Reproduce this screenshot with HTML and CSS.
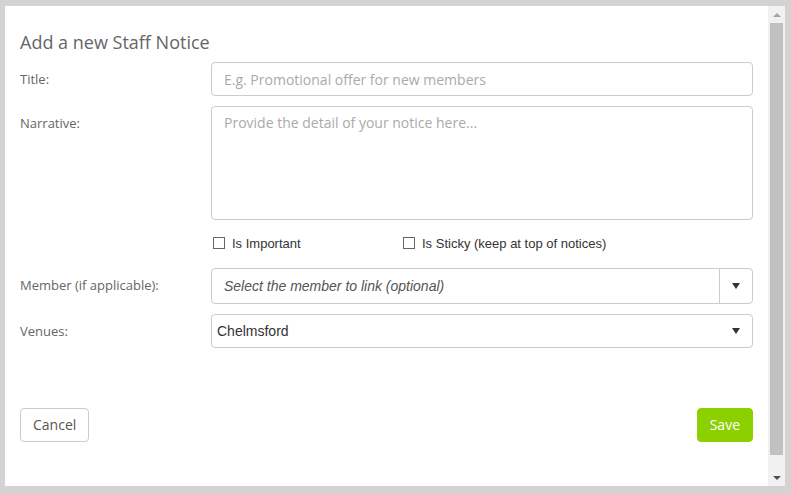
FILE: index.html
```html
<!DOCTYPE html>
<html lang="en">
<head>
  <meta charset="UTF-8" />
  <title>Add a new Staff Notice</title>
  <link rel="stylesheet" href="styles.css">
</head>
<body>
  <div class="frame">
    <div class="dialog">
      <form class="content">
        <h2>Add a new Staff Notice</h2>

        <div class="row">
          <label class="label">Title:</label>
          <input class="field" type="text" placeholder="E.g. Promotional offer for new members">
        </div>

        <div class="row">
          <label class="label">Narrative:</label>
          <textarea class="field area" placeholder="Provide the detail of your notice here..."></textarea>
        </div>

        <div class="row checks">
          <span class="label"></span>
          <div class="check-group">
            <label class="check"><span class="box"></span>Is Important</label>
            <label class="check"><span class="box"></span>Is Sticky (keep at top of notices)</label>
          </div>
        </div>

        <div class="row">
          <label class="label">Member (if applicable):</label>
          <div class="field combo">
            <span class="combo-text">Select the member to link (optional)</span>
            <span class="combo-btn"><span class="caret"></span></span>
          </div>
        </div>

        <div class="row">
          <label class="label">Venues:</label>
          <div class="field select">
            <span>Chelmsford</span>
            <span class="caret"></span>
          </div>
        </div>

        <div class="footer">
          <button type="button" class="btn">Cancel</button>
          <button type="button" class="btn btn-save">Save</button>
        </div>
      </form>

      <div class="scrollbar">
        <div class="sb-btn"><span class="sb-up"></span></div>
        <div class="sb-thumb"></div>
        <div class="sb-track"></div>
        <div class="sb-btn"><span class="sb-down"></span></div>
      </div>
    </div>
  </div>
</body>
</html>
```

FILE: styles.css
```css
* {
  box-sizing: border-box;
}
body {
  margin: 0;
  background: #d3d3d3;
  font-family: 'Open Sans', 'Liberation Sans', sans-serif;
  color: #666;
}
.frame {
  height: 494px;
  padding: 6px 6px 8px 5px;
}
.dialog {
  display: flex;
  height: 100%;
}
.content {
  flex: 1;
  background: #fff;
  padding: 24px 15px 0 15px;
  margin: 0;
}
h2 {
  margin: 0 0 8px;
  font-size: 18px;
  font-weight: 400;
  line-height: 24px;
  color: #666;
}
.row {
  display: flex;
  margin-bottom: 10px;
}
.label {
  width: 191px;
  flex: none;
  font-size: 13px;
  line-height: 18px;
  padding-top: 8px;
  color: #666;
}
.field {
  flex: 1;
  height: 34px;
  border: 1px solid #ccc;
  border-radius: 4px;
  background: #fff;
  font-family: 'Open Sans', sans-serif;
  font-size: 14px;
  padding: 0 12px;
  color: #555;
  outline: none;
}
.field::placeholder {
  color: #aaa;
}
.area {
  height: 114px;
  padding: 6px 12px;
  line-height: 20px;
  resize: none;
}
.checks {
  margin: 12px 0 14px;
  height: 22px;
}
.checks .label {
  padding: 0;
}
.check-group {
  display: flex;
  align-items: center;
  padding-left: 2px;
}
.check {
  width: 190px;
  display: flex;
  align-items: center;
  font-family: 'Liberation Sans', Arial, sans-serif;
  font-size: 13px;
  color: #333;
}
.check:last-child {
  width: auto;
}
.box {
  width: 12px;
  height: 12px;
  border: 1px solid #666;
  background: #fff;
  margin-right: 7px;
}
.combo {
  height: 36px;
  display: flex;
  align-items: center;
  padding: 0;
  font-family: 'Liberation Sans', Arial, sans-serif;
}
.combo-text {
  flex: 1;
  padding-left: 12px;
  font-style: italic;
  color: #555;
}
.combo-btn {
  width: 33px;
  height: 100%;
  border-left: 1px solid #ccc;
  display: flex;
  align-items: center;
  justify-content: center;
}
.select {
  display: flex;
  align-items: center;
  justify-content: space-between;
  padding: 0 12px 0 5px;
  font-family: 'Liberation Sans', Arial, sans-serif;
  color: #333;
}
.caret {
  width: 0;
  height: 0;
  border-left: 4px solid transparent;
  border-right: 4px solid transparent;
  border-top: 6px solid #333;
}
.footer {
  display: flex;
  justify-content: space-between;
  margin-top: 60px;
}
.btn {
  height: 34px;
  padding: 0 12px 2px;
  border: 1px solid #ccc;
  border-radius: 4px;
  background: #fff;
  font-family: 'Open Sans', sans-serif;
  font-size: 14px;
  color: #555;
}
.btn-save {
  background: #8dd000;
  border-color: #8dd000;
  color: #fff;
}
.scrollbar {
  width: 17px;
  background: #f1f1f1;
  display: flex;
  flex-direction: column;
  padding: 0 2px;
}
.sb-btn {
  height: 17px;
  display: flex;
  align-items: center;
  justify-content: center;
}
.sb-up {
  border-left: 4px solid transparent;
  border-right: 4px solid transparent;
  border-bottom: 4px solid #a3a3a3;
}
.sb-down {
  border-left: 4px solid transparent;
  border-right: 4px solid transparent;
  border-top: 4px solid #505050;
}
.sb-thumb {
  height: 432px;
  background: #c1c1c1;
}
.sb-track {
  flex: 1;
}
```
